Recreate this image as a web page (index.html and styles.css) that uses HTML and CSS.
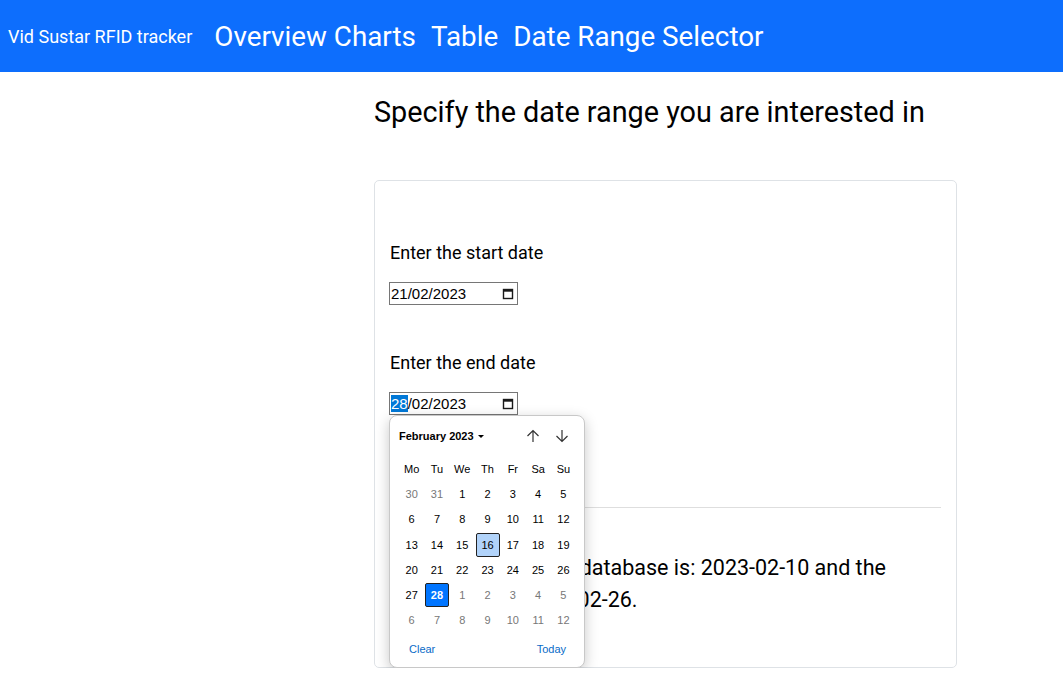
FILE: index.html
```html
<!DOCTYPE html>
<html lang="en">
<head>
<meta charset="utf-8">
<title>Vid Sustar RFID tracker</title>
<link rel="stylesheet" href="styles.css">
</head>
<body>
<nav class="navbar">
  <span class="brand">Vid Sustar RFID tracker</span>
  <a class="nav-link" href="#">Overview Charts</a>
  <a class="nav-link" href="#">Table</a>
  <a class="nav-link" href="#">Date Range Selector</a>
</nav>
<main class="main">
  <h2 class="title">Specify the date range you are interested in</h2>
  <section class="card">
    <div class="field start-field">
      <label class="field-label">Enter the start date</label>
      <div class="date-input">
        <span class="date-text">21/02/2023</span>
        <svg class="cal-icon" viewBox="0 0 12 12" width="12" height="12"><rect x="1.5" y="1.5" width="9" height="9" fill="none" stroke="#1a1a1a" stroke-width="1.4"/><rect x="1.5" y="1.5" width="9" height="2.2" fill="#1a1a1a"/></svg>
      </div>
    </div>
    <div class="field end-field">
      <label class="field-label">Enter the end date</label>
      <div class="date-wrap">
        <div class="date-input">
          <span class="date-text"><span class="sel">28</span>/02/2023</span>
          <svg class="cal-icon" viewBox="0 0 12 12" width="12" height="12"><rect x="1.5" y="1.5" width="9" height="9" fill="none" stroke="#1a1a1a" stroke-width="1.4"/><rect x="1.5" y="1.5" width="9" height="2.2" fill="#1a1a1a"/></svg>
        </div>
        <div class="picker">
          <div class="picker-head">
            <span class="month">February 2023 <span class="caret"></span></span>
            <span class="arrows">
              <svg viewBox="0 0 16 16" width="16" height="16"><path d="M8 14V2.5M2.5 8L8 2.5L13.5 8" fill="none" stroke="#333" stroke-width="1.2"/></svg>
              <svg viewBox="0 0 16 16" width="16" height="16"><path d="M8 2v11.5M2.5 8L8 13.5L13.5 8" fill="none" stroke="#333" stroke-width="1.2"/></svg>
            </span>
          </div>
          <div class="cal-grid">
            <span class="wd">Mo</span><span class="wd">Tu</span><span class="wd">We</span><span class="wd">Th</span><span class="wd">Fr</span><span class="wd">Sa</span><span class="wd">Su</span>
            <span class="d other">30</span><span class="d other">31</span><span class="d">1</span><span class="d">2</span><span class="d">3</span><span class="d">4</span><span class="d">5</span>
            <span class="d">6</span><span class="d">7</span><span class="d">8</span><span class="d">9</span><span class="d">10</span><span class="d">11</span><span class="d">12</span>
            <span class="d">13</span><span class="d">14</span><span class="d">15</span><span class="d"><span class="today">16</span></span><span class="d">17</span><span class="d">18</span><span class="d">19</span>
            <span class="d">20</span><span class="d">21</span><span class="d">22</span><span class="d">23</span><span class="d">24</span><span class="d">25</span><span class="d">26</span>
            <span class="d">27</span><span class="d"><span class="selected">28</span></span><span class="d other">1</span><span class="d other">2</span><span class="d other">3</span><span class="d other">4</span><span class="d other">5</span>
            <span class="d other">6</span><span class="d other">7</span><span class="d other">8</span><span class="d other">9</span><span class="d other">10</span><span class="d other">11</span><span class="d other">12</span>
          </div>
          <div class="picker-foot">
            <span class="link">Clear</span>
            <span class="link">Today</span>
          </div>
        </div>
      </div>
    </div>
    <button class="btn">Submit</button>
    <hr class="rule">
    <p class="info">The first date in the database is: 2023-02-10 and the latest date is: 2023-02-26.</p>
  </section>
</main>
</body>
</html>
```
FILE: styles.css
```css
* { box-sizing: border-box; }
html, body { margin: 0; padding: 0; }
body {
  font-family: Roboto, "Liberation Sans", Arial, sans-serif;
  color: #212529;
  background: #fff;
}
.navbar {
  height: 72px;
  background: #0d6efd;
  display: flex;
  align-items: center;
  padding-left: 8px;
  gap: 15px;
}
.brand {
  color: #fff;
  font-size: 18px;
  margin-right: 7px;
}
.nav-link {
  color: #fff;
  font-size: 27.8px;
  text-decoration: none;
}
.main {
  margin-left: 374px;
  width: 583px;
  padding-top: 21px;
}
.title {
  margin: 0;
  font-weight: 400;
  font-size: 28.8px;
  line-height: 38px;
  color: #000;
}
.card {
  margin-top: 49px;
  border: 1px solid #dee2e6;
  border-radius: 5px;
  padding: 58px 15px 51px 15px;
  height: 488px;
}
.field-label {
  display: block;
  font-size: 18px;
  line-height: 27px;
  color: #000;
}
.date-input {
  margin-top: 16px;
  margin-left: -1px;
  width: 129px;
  height: 23px;
  border: 1px solid #767676;
  display: flex;
  align-items: center;
  justify-content: space-between;
  padding: 0 3px 0 1px;
  font-family: "Liberation Sans", Arial, sans-serif;
  font-size: 15px;
  color: #000;
}
.sel { background: #0078d7; color: #fff; }
.cal-icon { display: block; }
.end-field { margin-top: 44px; }
.date-wrap { position: relative; }
.btn {
  display: block;
  margin-top: 45px;
  margin-left: -1px;
  height: 31px;
  width: 80px;
  border: 1px solid #0dcaf0;
  background: #0dcaf0;
  border-radius: 4px;
  color: #000;
  font-family: Roboto, sans-serif;
  font-size: 16px;
}
.rule {
  margin: 16px 0 0 0;
  border: 0;
  border-top: 1px solid #dedede;
}
.info {
  margin: 44px 0 0 0;
  padding-right: 20px;
  font-size: 21.5px;
  line-height: 32px;
  color: #000;
}
.picker {
  position: absolute;
  left: -1px;
  top: 23px;
  width: 196px;
  height: 253px;
  background: #fff;
  border: 1px solid #c8c8c8;
  border-radius: 8px;
  box-shadow: 0 4px 14px rgba(0,0,0,0.22);
  font-family: "Liberation Sans", Arial, sans-serif;
  z-index: 5;
}
.picker-head {
  height: 40px;
  display: flex;
  align-items: center;
  justify-content: space-between;
  padding: 0 14px 0 9px;
}
.month {
  font-size: 11px;
  font-weight: 700;
  color: #000;
  display: flex;
  align-items: center;
  gap: 4px;
}
.caret {
  width: 0; height: 0;
  border-left: 3px solid transparent;
  border-right: 3px solid transparent;
  border-top: 3px solid #000;
}
.arrows { display: flex; gap: 13px; }
.arrows svg { display: block; }
.cal-grid {
  display: grid;
  grid-template-columns: repeat(7, 25.3px);
  grid-auto-rows: 25.3px;
  margin-left: 9px;
}
.wd, .d {
  display: flex;
  align-items: center;
  justify-content: center;
  font-size: 11px;
  color: #000;
}
.d.other { color: #777; }
.today, .selected {
  width: 24px;
  height: 24px;
  display: flex;
  align-items: center;
  justify-content: center;
  border: 1px solid #222;
  border-radius: 2px;
}
.today { background: #b1d3fa; }
.selected { background: #0075ff; color: #fff; font-weight: 700; }
.picker-foot {
  display: flex;
  justify-content: space-between;
  padding: 0 18px 0 19px;
  margin-top: 10px;
}
.link { font-size: 11px; color: #0a6bc8; }
```
